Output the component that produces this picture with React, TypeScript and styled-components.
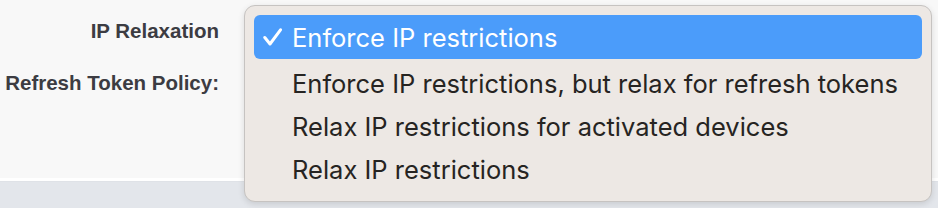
import React from "react";
import styled, { createGlobalStyle } from "styled-components";

const Global = createGlobalStyle`
  html, body { margin: 0; padding: 0; }
  body { width: 938px; height: 208px; overflow: hidden; background: #e3e6eb; }
`;

const Page = styled.div`
  position: relative;
  width: 938px;
  height: 208px;
  display: flex;
  flex-direction: column;
`;

const Panel = styled.div`
  height: 178px;
  background: #f8f8f8;
  border-bottom: 3px solid #ffffff;
  box-shadow: 0 1px 0 #dfe2e7;
  display: flex;
`;

const Labels = styled.div`
  width: 219px;
  padding-top: 19px;
  display: flex;
  flex-direction: column;
  align-items: flex-end;
  gap: 28px;
`;

const Label = styled.div`
  font-family: "Liberation Sans", Arial, sans-serif;
  font-weight: 700;
  font-size: 20.5px;
  line-height: 24px;
  color: #3c3c42;
  white-space: nowrap;
`;

const Menu = styled.ul`
  position: absolute;
  left: 244px;
  top: 5px;
  width: 688px;
  height: 197px;
  box-sizing: border-box;
  margin: 0;
  padding: 9px 9px 10px;
  list-style: none;
  background: #ede8e4;
  border: 1px solid #c6c3c1;
  border-radius: 11px;
  box-shadow: 0 2px 6px rgba(0, 0, 0, 0.12);
  display: flex;
  flex-direction: column;
`;

const Item = styled.li<{ $active?: boolean }>`
  height: ${(p) => (p.$active ? 44 : 43)}px;
  flex: none;
  margin-bottom: ${(p) => (p.$active ? 3 : 0)}px;
  display: flex;
  align-items: center;
  border-radius: 6px;
  background: ${(p) => (p.$active ? "#4b9cfa" : "transparent")};
  color: ${(p) => (p.$active ? "#ffffff" : "#262422")};
  font-family: Inter, "Noto Sans", sans-serif;
  font-size: 25.5px;
  white-space: nowrap;
`;

const Check = styled.span`
  width: 38px;
  padding-left: 9px;
  box-sizing: border-box;
  display: flex;
  align-items: center;
`;

const CheckIcon = () => (
  <svg width="20" height="18" viewBox="0 0 20 18">
    <path d="M1.8 9.5 L7 16 L17.5 1.8" fill="none" stroke="#ffffff" strokeWidth="3" strokeLinecap="round" strokeLinejoin="round" />
  </svg>
);

const options = [
  "Enforce IP restrictions",
  "Enforce IP restrictions, but relax for refresh tokens",
  "Relax IP restrictions for activated devices",
  "Relax IP restrictions",
];

export default function App() {
  return (
    <>
      <Global />
      <Page>
        <Panel>
          <Labels>
            <Label>IP Relaxation</Label>
            <Label>Refresh Token Policy:</Label>
          </Labels>
        </Panel>
        <Menu>
          {options.map((o, i) => (
            <Item key={o} $active={i === 0}>
              <Check>{i === 0 ? <CheckIcon /> : null}</Check>
              {o}
            </Item>
          ))}
        </Menu>
      </Page>
    </>
  );
}
